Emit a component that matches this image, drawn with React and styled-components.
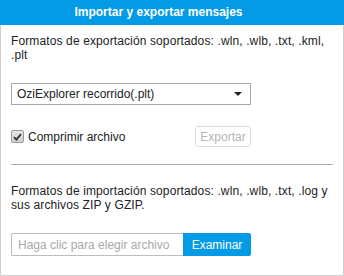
import React from "react";
import styled, { createGlobalStyle } from "styled-components";

const Global = createGlobalStyle`
  html, body { margin: 0; padding: 0; background: #fff; }
  body { font-family: "Liberation Sans", Arial, sans-serif; }
`;

const Panel = styled.div`
  width: 344px;
  height: 276px;
  box-sizing: border-box;
  display: flex;
  flex-direction: column;
  font-family: "Liberation Sans", Arial, sans-serif;
  color: #222;
  font-size: 12px;
`;

const Header = styled.div`
  height: 25px;
  flex: none;
  background: #039be5;
  color: #fff;
  font-weight: bold;
  font-size: 12px;
  line-height: 25px;
  text-align: center;
  padding-right: 27px;
`;

const Body = styled.div`
  flex: 1;
  border: 1px solid #cfcfcf;
  border-top: none;
  padding: 9px 10px 0 10px;
  display: flex;
  flex-direction: column;
`;

const Text = styled.p`
  margin: 0;
  line-height: 14px;
  letter-spacing: 0.12px;
  margin-top: ${(p) => p.$top || 0}px;
`;

const SelectBox = styled.div`
  margin-top: 21px;
  width: 240px;
  height: 22px;
  box-sizing: border-box;
  border: 1px solid #a9a9a9;
  display: flex;
  align-items: center;
  justify-content: space-between;
  padding: 0 8px 0 5px;
  color: #222;
`;

const Arrow = styled.span`
  width: 0;
  height: 0;
  border-left: 4px solid transparent;
  border-right: 4px solid transparent;
  border-top: 4px solid #222;
`;

const Row = styled.div`
  margin-top: 21px;
  width: 240px;
  display: flex;
  align-items: center;
  justify-content: space-between;
`;

const CheckLabel = styled.label`
  display: flex;
  align-items: center;
  gap: 4px;
`;

const Box = styled.span`
  width: 13px;
  height: 13px;
  box-sizing: border-box;
  border: 1px solid #9a9a9a;
  border-radius: 2px;
  background: linear-gradient(#e6e6e6, #cfcfcf);
  display: flex;
  align-items: center;
  justify-content: center;
`;

const GhostButton = styled.button`
  height: 21px;
  width: 56px;
  box-sizing: border-box;
  border: 1px solid #dcdcdc;
  border-radius: 3px;
  background: #fff;
  color: #b5b5b5;
  font-family: inherit;
  font-size: 12px;
  padding: 0;
`;

const Divider = styled.hr`
  margin: 17px 0 0 0;
  border: none;
  border-top: 1px solid #b0b0b0;
  height: 0;
`;

const FileRow = styled.div`
  margin-top: 21px;
  width: 240px;
  height: 23px;
  display: flex;
`;

const FileInput = styled.div`
  flex: 1;
  box-sizing: border-box;
  border: 1px solid #bdbdbd;
  border-right: none;
  border-radius: 2px 0 0 2px;
  color: #a8a8a8;
  padding-left: 6px;
  display: flex;
  align-items: center;
`;

const BlueButton = styled.button`
  width: 68px;
  border: none;
  background: #039be5;
  color: #fff;
  font-family: inherit;
  font-size: 12px;
  padding: 0;
  border-radius: 0 2px 2px 0;
`;

export default function App() {
  return (
    <>
      <Global />
      <Panel>
        <Header>Importar y exportar mensajes</Header>
        <Body>
          <Text>Formatos de exportación soportados: .wln, .wlb, .txt, .kml, .plt</Text>
          <SelectBox>
            <span>OziExplorer recorrido(.plt)</span>
            <Arrow />
          </SelectBox>
          <Row>
            <CheckLabel>
              <Box>
                <svg width="9" height="8" viewBox="0 0 9 8">
                  <path d="M1 4.2 L3.4 6.6 L8 1.2" fill="none" stroke="#333" strokeWidth="1.8" />
                </svg>
              </Box>
              Comprimir archivo
            </CheckLabel>
            <GhostButton>Exportar</GhostButton>
          </Row>
          <Divider />
          <Text $top={19}>
            Formatos de importación soportados: .wln, .wlb, .txt, .log y sus archivos ZIP y GZIP.
          </Text>
          <FileRow>
            <FileInput>Haga clic para elegir archivo</FileInput>
            <BlueButton>Examinar</BlueButton>
          </FileRow>
        </Body>
      </Panel>
    </>
  );
}
